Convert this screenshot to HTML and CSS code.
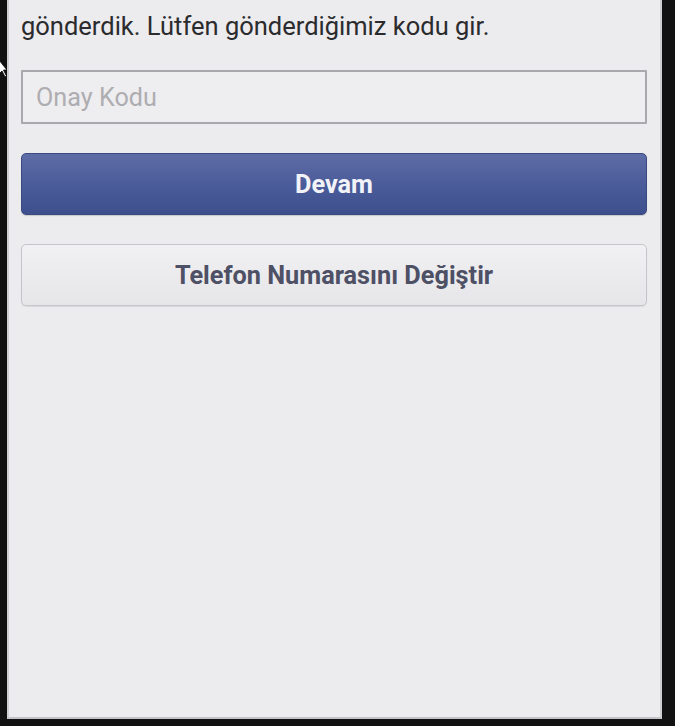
FILE: index.html
```html
<!DOCTYPE html>
<html lang="tr">
<head>
<meta charset="utf-8">
<title>Onay Kodu</title>
<link rel="stylesheet" href="styles.css">
</head>
<body>
<div class="frame">
  <div class="screen">
    <p class="info">gönderdik. Lütfen gönderdiğimiz kodu gir.</p>
    <input class="code" type="text" placeholder="Onay Kodu">
    <button class="btn btn-primary" type="button">Devam</button>
    <button class="btn btn-secondary" type="button">Telefon Numarasını Değiştir</button>
  </div>
  <svg class="cursor" width="8" height="18" viewBox="0 0 8 18"><path d="M0 0 L0 14 L3 11 L6 17 L7.5 16 L4.5 10 L8 10 Z" fill="#fff" stroke="#000" stroke-width="0.8"/></svg>
</div>
</body>
</html>
```
FILE: styles.css
```css
html, body {
  margin: 0;
  padding: 0;
  background: #111112;
}
.frame {
  position: relative;
  width: 675px;
  height: 726px;
  overflow: hidden;
}
.screen {
  box-sizing: border-box;
  margin-left: 7px;
  width: 655px;
  height: 719px;
  background: #ecebee;
  border-left: 2px solid #cfced2;
  border-right: 2px solid #cfced2;
  border-bottom: 2px solid #c4c3c7;
  padding: 10px 13px 0 12px;
  display: flex;
  flex-direction: column;
  font-family: Roboto, "Noto Sans", sans-serif;
}
.info {
  margin: 0;
  font-size: 25.5px;
  line-height: 32px;
  color: #2b2b2d;
  white-space: nowrap;
}
.code {
  box-sizing: border-box;
  margin-top: 28px;
  height: 54px;
  width: 100%;
  border: 2px solid #a9a8ac;
  border-radius: 1px;
  background: #eeedf0;
  padding: 0 13px;
  font-family: Roboto, "Noto Sans", sans-serif;
  font-size: 25.2px;
  color: #2b2b2d;
  outline: none;
}
.code::placeholder {
  color: #aeadb1;
}
.btn {
  box-sizing: border-box;
  width: 100%;
  height: 62px;
  border-radius: 5px;
  font-family: Roboto, "Noto Sans", sans-serif;
  font-weight: 700;
  font-size: 25.3px;
  padding: 0;
}
.btn-primary {
  margin-top: 29px;
  color: #f2f3f8;
  background: linear-gradient(#5e6ca6, #4b5c9a 50%, #3d4f8d);
  border: 1px solid #3a4a82;
  box-shadow: 0 1px 1px rgba(0,0,0,0.15);
}
.btn-secondary {
  margin-top: 29px;
  color: #4e5065;
  background: linear-gradient(#f1f0f2, #e6e5e8);
  border: 1px solid #c6c5c9;
  box-shadow: 0 1px 1px rgba(0,0,0,0.08);
}
.cursor {
  position: absolute;
  left: -1px;
  top: 60px;
}
```
